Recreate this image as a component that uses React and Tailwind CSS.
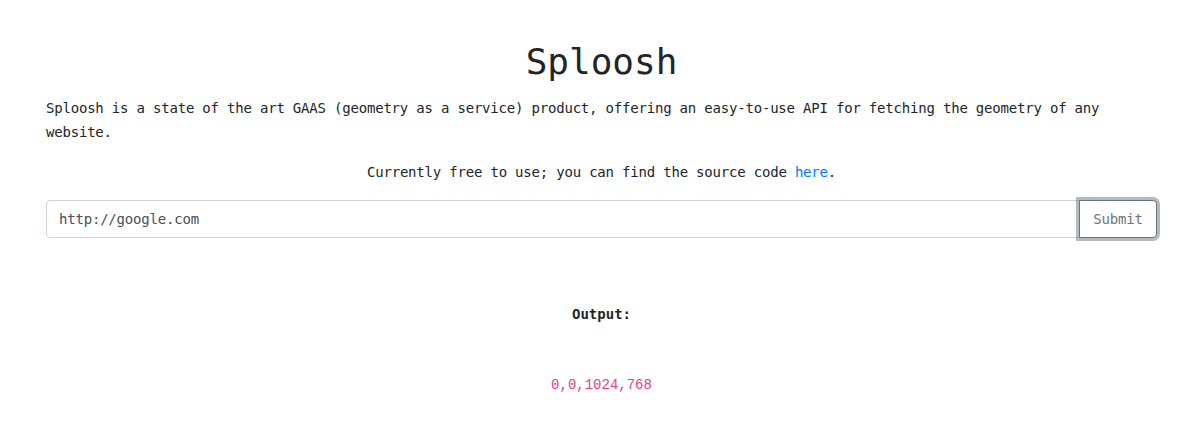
export default function App() {
  const mono = "font-['DejaVu_Sans_Mono','Liberation_Mono',monospace]";
  return (
    <div className={`min-h-[441px] bg-white text-[#212529] ${mono}`}>
      <div className="w-[1111px] ml-[46px] pt-[40px]">
        <h1 className="text-center text-[36px] leading-[43px] font-normal">Sploosh</h1>
        <p className="mt-[13px] text-[14px] leading-[24px] tracking-[-0.2px]">
          Sploosh is a state of the art GAAS (geometry as a service) product, offering an easy-to-use API for fetching the geometry of any website.
        </p>
        <p className="mt-[16px] text-center text-[14px] leading-[24px] tracking-[-0.2px]">
          Currently free to use; you can find the source code{" "}
          <a href="#" className="text-[#007bff]">here</a>.
        </p>
        <form className="mt-[16px] flex h-[38px]" onSubmit={(e) => e.preventDefault()}>
          <input
            defaultValue="http://google.com"
            className="flex-1 min-w-0 h-[38px] border border-[#ced4da] rounded-l-[4px] px-[12px] text-[14px] tracking-[-0.2px] text-[#495057] outline-none"
          />
          <button
            type="submit"
            className="ml-[-1px] w-[78px] h-[38px] border border-[#6c757d] rounded-r-[4px] text-[14px] tracking-[-0.2px] text-[#6c757d] bg-white shadow-[0_0_0_3px_rgba(108,117,125,0.5)]"
          >
            Submit
          </button>
        </form>
        <p className="mt-[64px] text-center text-[14px] leading-[24px] font-bold">Output:</p>
        <p className="mt-[46px] text-center">
          <code className="text-[14px] leading-[20px] text-[#e83e8c]">0,0,1024,768</code>
        </p>
      </div>
    </div>
  );
}
